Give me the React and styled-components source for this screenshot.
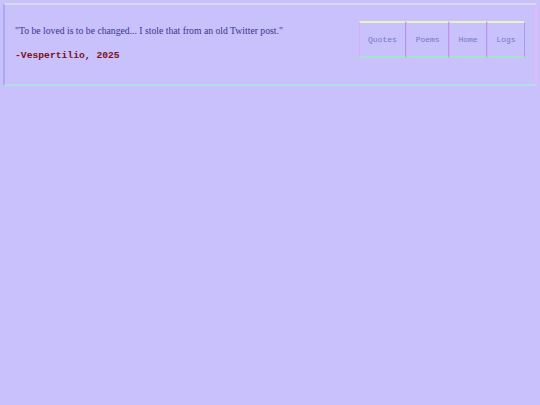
import styled, { createGlobalStyle } from 'styled-components';

const GlobalStyle = createGlobalStyle`
    html, body {
        margin: 0;
        padding: 0;
        background: #c9c1fb;
    }
    body {
        min-height: 405px;
    }
`;

const links = ['Quotes', 'Poems', 'Home', 'Logs'];

const App = () => {
    return (
        <Page>
            <GlobalStyle />
            <Header>
                <QuoteBlock>
                    <Quote>"To be loved is to be changed... I stole that from an old Twitter post."</Quote>
                    <Author>-Vespertilio, 2025</Author>
                </QuoteBlock>
                <Nav>
                    {links.map((l) => (
                        <NavButton key={l}>{l}</NavButton>
                    ))}
                </Nav>
            </Header>
        </Page>
    );
};

export default App;

const Page = styled.div`
    padding: 3px 3px;
`;

const Header = styled.header`
    display: flex;
    justify-content: space-between;
    align-items: flex-start;
    padding: 19px 10px 21px 10px;
    border-style: solid;
    border-width: 2px;
    border-top-color: #dcdaf0;
    border-left-color: #aaa8f6;
    border-right-color: #e2baf8;
    border-bottom-color: #b6dce6;
`;

const QuoteBlock = styled.div`
    display: flex;
    flex-direction: column;
    gap: 11px;
`;

const Quote = styled.p`
    margin: 0;
    font-family: "Liberation Serif", serif;
    font-size: 9.7px;
    line-height: 14px;
    color: #3a3590;
`;

const Author = styled.p`
    margin: 0;
    font-family: "Liberation Mono", monospace;
    font-weight: bold;
    font-size: 9.7px;
    line-height: 14px;
    color: #7a1020;
`;

const Nav = styled.nav`
    display: flex;
    margin-top: -3px;
`;

const NavButton = styled.a`
    display: block;
    padding: 11.5px 8.4px;
    font-family: "Liberation Mono", monospace;
    font-size: 8px;
    line-height: 10px;
    color: #7478c4;
    border-style: solid;
    border-width: 2px 1px;
    border-top-color: #eef0c4;
    border-left-color: #e0a8f6;
    border-right-color: #a49cf0;
    border-bottom-color: #a8e0d4;
    cursor: pointer;
`;
